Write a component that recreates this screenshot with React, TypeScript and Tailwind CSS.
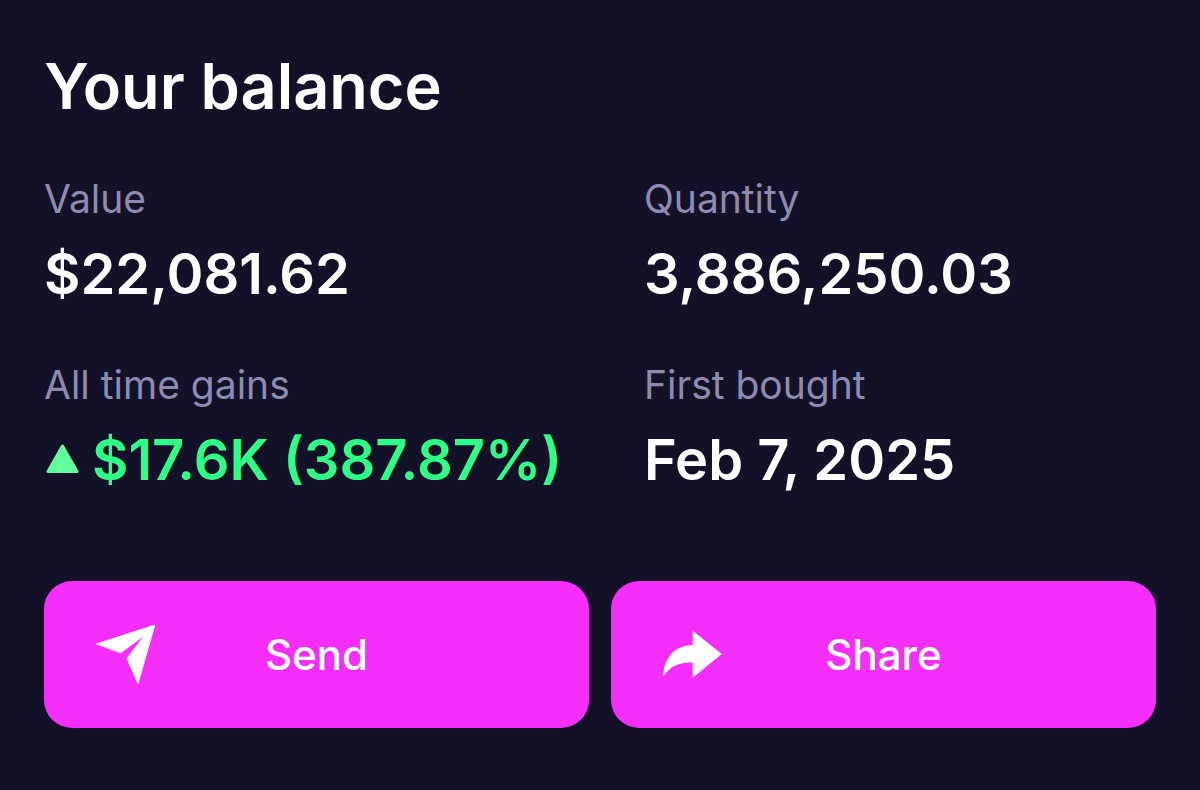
import React from 'react';

const stats = [
    { label: 'Value', value: '$22,081.62' },
    { label: 'Quantity', value: '3,886,250.03' },
    { label: 'All time gains', value: '$17.6K (387.87%)', gain: true },
    { label: 'First bought', value: 'Feb 7, 2025' },
];

function TriangleIcon() {
    return (
        <svg viewBox="0 0 36 36" className="size-9 shrink-0" aria-hidden="true">
            <path
                d="M18.5 4 L33 29.5 H4 Z"
                fill="#62ff9f"
                stroke="#62ff9f"
                strokeWidth="3"
                strokeLinejoin="round"
            />
        </svg>
    );
}

function SendIcon() {
    return (
        <svg viewBox="0 0 60 60" className="size-[60px]" fill="currentColor" stroke="currentColor" strokeWidth="1" strokeLinejoin="round" aria-hidden="true">
            <path d="M58.8 0 L0.5 19 L24.6 27.8 L48.8 10 L31 33.4 L42 58.4 Z" />
        </svg>
    );
}

function ShareIcon() {
    return (
        <svg viewBox="0 0 60 60" className="size-[60px]" fill="currentColor" aria-hidden="true">
            <path d="M29.7 5.8 L58.8 29 L29.7 52.8 V37.6 C16.5 36.8 6.5 41.5 0.3 51.6 C0.5 33.5 11.5 20.2 29.7 20 Z" />
        </svg>
    );
}

const actions = [
    { label: 'Send', icon: SendIcon },
    { label: 'Share', icon: ShareIcon },
];

export default function App() {
    return (
        <main className="min-h-screen bg-[#131128] px-11 pt-[46px] pb-[62px] font-['Inter',sans-serif] text-white">
            <h1 className="text-[63px] leading-[80px] font-semibold">Your balance</h1>

            <dl className="mt-[47px] grid grid-cols-2 gap-x-[88px] gap-y-[49px]">
                {stats.map((stat) => (
                    <div key={stat.label}>
                        <dt className="text-[39px] leading-[52px] text-[#8f8bb0]">{stat.label}</dt>
                        <dd
                            className={
                                stat.gain
                                    ? 'mt-[13px] flex items-center gap-3 text-[56px] leading-[72px] font-semibold whitespace-nowrap text-[#2dff87]'
                                    : 'mt-[13px] text-[56px] leading-[72px] font-semibold whitespace-nowrap'
                            }
                        >
                            {stat.gain && <TriangleIcon />}
                            {stat.value}
                        </dd>
                    </div>
                ))}
            </dl>

            <div className="mt-[85px] grid grid-cols-2 gap-[22px]">
                {actions.map(({ label, icon: Icon }) => (
                    <button
                        key={label}
                        type="button"
                        className="grid h-[147px] grid-cols-[60px_1fr_60px] items-center rounded-[28px] bg-[#f62efc] px-[52px] text-[42px] leading-[52px] font-medium"
                    >
                        <Icon />
                        <span>{label}</span>
                    </button>
                ))}
            </div>
        </main>
    );
}
